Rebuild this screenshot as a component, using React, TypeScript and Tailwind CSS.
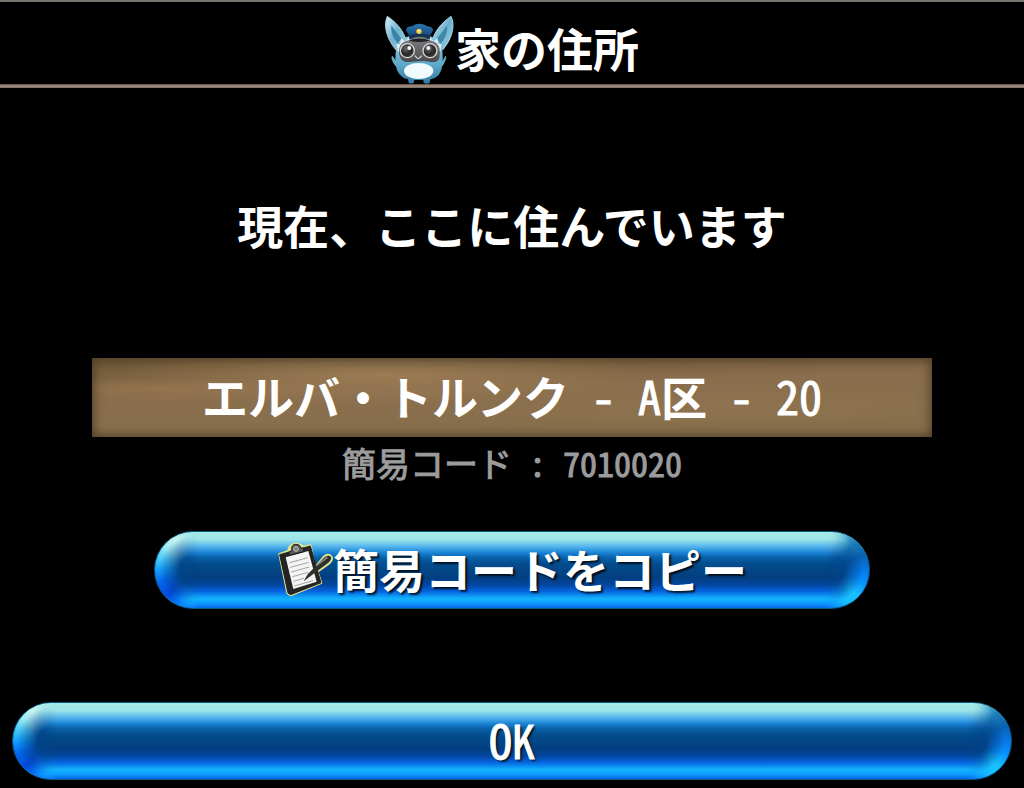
import type { ButtonHTMLAttributes, ReactNode } from 'react';

const ADDRESS = {
  town: 'エルバ・トルンク',
  district: 'A',
  number: '20',
  code: '7010020',
};

// Latin letters and digits are set in a narrow face, half as wide as the kana
function Narrow({ children }: { children: ReactNode }) {
  return (
    <span className="font-['Noto_Sans_Mono_CJK_JP','Liberation_Sans_Narrow',sans-serif] font-normal whitespace-pre [-webkit-text-stroke:1px_currentColor]">
      {children}
    </span>
  );
}

function MascotIcon() {
  return (
    <svg viewBox="21 12 210 210" className="size-[70px] shrink-0" aria-hidden="true">
      <defs>
        <linearGradient id="ear" x1="0" y1="0" x2="1" y2="1">
          <stop offset="0" stopColor="#d9f2f8" />
          <stop offset="0.5" stopColor="#6fb2ce" />
          <stop offset="1" stopColor="#9fd3e6" />
        </linearGradient>
        <linearGradient id="fur" x1="0" y1="0" x2="0" y2="1">
          <stop offset="0" stopColor="#8cc7e0" />
          <stop offset="0.6" stopColor="#5fa9ca" />
          <stop offset="1" stopColor="#2f7a9e" />
        </linearGradient>
        <linearGradient id="mask" x1="0" y1="0" x2="0" y2="1">
          <stop offset="0" stopColor="#7b7b7d" />
          <stop offset="1" stopColor="#47484b" />
        </linearGradient>
        <radialGradient id="eye" cx="0.4" cy="0.35" r="0.7">
          <stop offset="0" stopColor="#6b6b6d" />
          <stop offset="0.6" stopColor="#262628" />
          <stop offset="1" stopColor="#4a4a4c" />
        </radialGradient>
        <linearGradient id="cap" x1="0" y1="0" x2="0" y2="1">
          <stop offset="0" stopColor="#2d78b4" />
          <stop offset="1" stopColor="#123f70" />
        </linearGradient>
      </defs>
      <path d="M28 19C16 44 24 84 54 120L84 90C76 62 56 38 28 19Z" fill="url(#ear)" stroke="#a3d3e4" strokeWidth="3" />
      <path d="M40 46C48 60 62 73 75 92L62 104C46 86 38 68 40 46Z" fill="#3b83a6" />
      <path d="M219 19C232 44 224 84 194 120L163 90C171 62 192 38 219 19Z" fill="url(#ear)" stroke="#a3d3e4" strokeWidth="3" />
      <path d="M207 46C199 60 186 73 173 92L186 104C201 86 210 68 207 46Z" fill="#3f88a8" />
      <path d="M54 152L44 138Q38 138 42 150Q48 170 69 179ZM194 152L202 138Q208 138 202 152Q196 170 179 179Z" fill="#65aac8" />
      <path d="M55 113Q60 76 124 75Q186 76 191 113Q196 136 193 164Q190 202 157 208L155 219Q147 223 137 219L136 210H109L107 219Q98 223 92 218L90 208Q57 200 53 164Q51 133 55 113Z" fill="url(#fur)" />
      <path d="M60 126L55 103L66 102L69 84L80 94L95 81L92 115ZM187 126L191 103L181 102L178 84L167 94L155 81L157 115Z" fill="#dceef4" />
      <path d="M73 99Q92 86 124 90Q156 86 175 99Q190 114 184 143Q181 158 157 156Q140 151 122 154Q103 157 83 156Q65 151 63 129Q61 110 73 99Z" fill="url(#mask)" />
      <circle cx="88" cy="122" r="21" fill="url(#eye)" stroke="#d6d6d4" strokeWidth="4" />
      <circle cx="156" cy="122" r="21" fill="url(#eye)" stroke="#d6d6d4" strokeWidth="4" />
      <circle cx="94" cy="114" r="6" fill="#f5f5f5" />
      <circle cx="151" cy="114" r="6" fill="#f5f5f5" />
      <path d="M112 138Q121 153 130 138" fill="none" stroke="#dedede" strokeWidth="4" strokeLinecap="round" />
      <ellipse cx="122" cy="183" rx="44" ry="24" fill="#f1fafd" />
      <path d="M84 62Q84 49 101 49Q113 40 124 41Q139 41 148 49Q166 50 165 62Q158 73 154 83H95Q92 72 84 62Z" fill="url(#cap)" />
      <path d="M94 76Q123 67 155 76L156 88Q124 80 94 88Z" fill="#16324c" />
      <path d="M92 91Q124 78 156 91Q142 97 124 96Q104 97 92 91Z" fill="#202326" />
      <path d="M105 86Q124 79 145 86" fill="none" stroke="#74797d" strokeWidth="4" />
      <circle cx="123" cy="64" r="8" fill="#f2cc42" />
      <circle cx="122" cy="62" r="3" fill="#fff2a0" />
    </svg>
  );
}

function ClipboardIcon() {
  return (
    <svg viewBox="27 21 168 168" className="size-14 shrink-0" aria-hidden="true">
      <g fill="#dfe38a" stroke="#dfe38a" strokeWidth="8" strokeLinejoin="round">
        <path d="M35 58L62 48Q64 28 83 27Q99 27 104 36L127 32L136 77L159 143L68 180L59 174Z" />
        <path d="M112 133L168 66Q181 55 190 66Q193 77 182 85L131 121Z" />
      </g>
      <path d="M35 59L127 33L159 143L68 179L60 174Z" fill="#242424" stroke="#242424" strokeWidth="3" strokeLinejoin="round" />
      <path d="M53 67L121 48L146 140L76 162Z" fill="#f4f4f2" />
      <g stroke="#a3a5a5" strokeWidth="3">
        <path d="M65 83L119 68" />
        <path d="M67 97L122 82" />
        <path d="M70 111L124 96" />
        <path d="M73 125L121 112" />
        <path d="M76 139L108 130" />
        <path d="M79 153L135 137" />
      </g>
      <path d="M62 61L64 50L72 47Q68 29 83 28Q97 28 98 39L106 39L107 50Z" fill="#595959" stroke="#1b1b1b" strokeWidth="3" />
      <circle cx="84" cy="42" r="7" fill="#777" stroke="#c4c4c4" strokeWidth="3" />
      <path d="M107 139L119 118L168 68Q181 57 189 66Q191 75 181 83L128 123Z" fill="#2f2f2f" />
      <path d="M146 91L177 68" stroke="#858585" strokeWidth="5" strokeLinecap="round" />
    </svg>
  );
}

interface GlossyButtonProps extends ButtonHTMLAttributes<HTMLButtonElement> {
  icon?: ReactNode;
}

function GlossyButton({ icon, children, ...props }: GlossyButtonProps) {
  return (
    <button
      type="button"
      className="relative flex w-full items-center justify-center overflow-hidden rounded-full border border-[#0c5a86] bg-[linear-gradient(180deg,#a5ebe6_0%,#9be4e8_10%,#55b5ee_19%,#1c84d6_27%,#0860a8_34%,#034c8c_42%,#033e80_60%,#0346a0_70%,#0664e0_78%,#12b4ff_88%,#0d98ff_94%,#0868e8_100%)] py-2 text-white [text-shadow:2px_2px_2px_#000c]"
      {...props}
    >
      {/* rounded ends: the light comes from the top left */}
      <span className="absolute inset-y-0 left-0 w-11 bg-[#03448a] [mask-image:linear-gradient(90deg,black_45%,transparent)]">
        <span className="block h-full bg-[conic-gradient(at_38px_50%,#9be4e8_0deg,#12b4ff_180deg,#0880ff_200deg,#0248d8_225deg,#0468ee_250deg,#12a0ff_270deg,#4ccdf8_290deg,#a0ecf2_310deg,#c8f2ee_330deg,#a5ebe6_360deg)] [mask-image:radial-gradient(circle_at_38px_50%,transparent_13px,black_34px)]" />
      </span>
      <span className="absolute inset-y-0 right-0 w-11 bg-[#03448a] [mask-image:linear-gradient(270deg,black_45%,transparent)]">
        <span className="block h-full bg-[conic-gradient(at_6px_50%,#a5ebe6_0deg,#58b4d4_20deg,#1c7cb8_40deg,#0862b0_65deg,#0878e8_90deg,#0890ff_110deg,#18c0ff_135deg,#18c0ff_155deg,#12a8ff_180deg,#a5ebe6_360deg)] [mask-image:radial-gradient(circle_at_6px_50%,transparent_13px,black_32px)]" />
      </span>
      <span className="relative flex items-center">
        {icon}
        <span className="pb-1 leading-[56px]">{children}</span>
      </span>
    </button>
  );
}

export default function App() {
  return (
    <div className="flex min-h-screen flex-col bg-black font-['Noto_Sans_CJK_JP',sans-serif] text-[46px] font-bold text-white">
      <header className="border-t-2 border-[#77736f] pt-3">
        <div className="flex items-center justify-center">
          <MascotIcon />
          <h1 className="pb-1 leading-[60px]">家の住所</h1>
        </div>
        <div className="h-1 bg-linear-to-b from-[#5c4639] via-[#a8978b] to-[#75665c]" />
      </header>

      <main className="flex flex-1 flex-col items-center pt-[106px]">
        <p className="text-center leading-[60px]">現在、ここに住んでいます</p>

        <div className="mt-[104px] w-[82%] bg-[#886d4b] bg-[radial-gradient(ellipse_at_35%_22%,#9a7b54_0%,transparent_35%),radial-gradient(ellipse_at_8%_40%,#94734d_0%,transparent_18%),radial-gradient(ellipse_at_75%_60%,#8f7350_0%,transparent_30%),linear-gradient(178deg,#6f5838_0%,#8a6e4d_40%,#87704c_100%)] pt-1.5 pb-2.5 text-center leading-[63px] shadow-[inset_0_0_12px_1px_#4a3922]">
          {ADDRESS.town}
          <Narrow>{` - ${ADDRESS.district}`}</Narrow>
          区
          <Narrow>{` - ${ADDRESS.number}`}</Narrow>
        </div>
        <p className="pb-1 text-center text-[34px] leading-[52px] font-normal text-[#9c9c9c] [-webkit-text-stroke:1px_currentColor]">
          簡易コード
          <Narrow>{` : ${ADDRESS.code}`}</Narrow>
        </p>

        <div className="mt-[38px] w-[70%]">
          <GlossyButton icon={<ClipboardIcon />}>簡易コードをコピー</GlossyButton>
        </div>
      </main>

      <footer className="px-3 pb-2">
        <GlossyButton>
          <Narrow>OK</Narrow>
        </GlossyButton>
      </footer>
    </div>
  );
}
